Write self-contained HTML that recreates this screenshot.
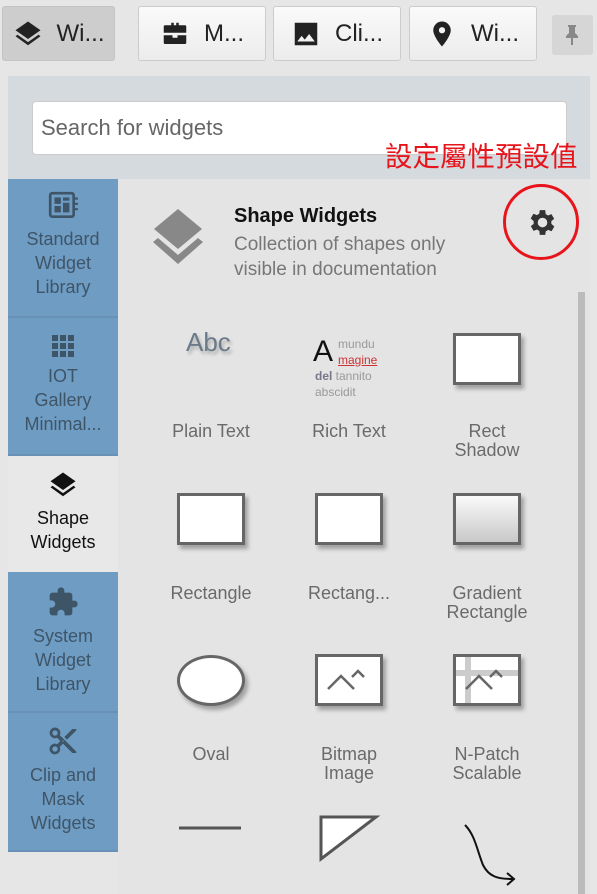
<!DOCTYPE html>
<html><head><meta charset="utf-8"><style>
*{box-sizing:border-box;margin:0;padding:0}
body{width:597px;height:894px;background:#e6e6e6;font-family:"Liberation Sans","Noto Sans CJK TC",sans-serif;position:relative;overflow:hidden}
.tab{position:absolute;top:6px;height:55px;border:1px solid #ccc;border-radius:3px;background:linear-gradient(#fafafa,#ececec);font-size:24px;color:#222;display:flex;align-items:center;justify-content:center;gap:14px}
.tab.act{background:#cdcdcd;border-color:#c4c4c4}
.pin{position:absolute;left:552px;top:15px;width:41px;height:40px;background:#d6d6d6;border-radius:3px}
.hdr{position:absolute;left:8px;top:76px;width:582px;height:103px;background:#d4dade}
.search{position:absolute;left:32px;top:101px;width:535px;height:54px;background:#fff;border:1px solid #ccc;border-radius:4px;font-size:22px;color:#666;padding:13px 0 0 8px}
.cn{position:absolute;left:385px;top:134px;font-size:27.5px;color:#e8141c;font-family:"Noto Sans CJK TC",sans-serif;letter-spacing:0}
.side{position:absolute;left:8px;width:110px;background:#6f9cc3;color:#3e5568;font-size:18px;text-align:center;line-height:24px;border-bottom:2px solid #6891b5}
.side svg{display:block;margin:0 auto 6px}
.main{position:absolute;left:118px;top:179px;width:472px;height:715px;background:#e4e4e4}
.lbl{position:absolute;width:130px;text-align:center;font-size:18px;color:#6a6a6a;line-height:19px}
.box{position:absolute;width:68px;height:52px;background:#fff;border:3px solid #666;box-shadow:3px 4px 4px rgba(0,0,0,.3)}
</style></head><body>
<div class="tab act" style="left:2px;width:113px"><svg width="30" height="30" viewBox="0 0 24 24"><path fill="#222" d="M12 2L2 9l10 7 10-7z"/><path fill="#222" d="M12 18.5L3.6 12.6 2 13.8 12 21l10-7.2-1.6-1.2z"/></svg>Wi...</div>
<div class="tab" style="left:138px;width:128px"><svg width="30" height="30" viewBox="0 0 24 24"><path fill="#222" d="M9 3h6v2h5a1 1 0 011 1v5H3V6a1 1 0 011-1h5zm2 0v2h2V3zM3 13h7v2h4v-2h7v6a1 1 0 01-1 1H4a1 1 0 01-1-1z"/></svg>M...</div>
<div class="tab" style="left:273px;width:128px"><svg width="30" height="30" viewBox="0 0 24 24"><path fill="#222" d="M3 3h18v18H3zm2 15h14l-4.5-6-3.5 4.5-2.5-3z"/></svg>Cli...</div>
<div class="tab" style="left:409px;width:128px"><svg width="30" height="30" viewBox="0 0 24 24"><path fill="#222" d="M12 2a7 7 0 00-7 7c0 5 7 13 7 13s7-8 7-13a7 7 0 00-7-7zm0 9.5a2.5 2.5 0 110-5 2.5 2.5 0 010 5z"/></svg>Wi...</div>
<div class="pin"><svg style="margin:9px 0 0 13px" width="14" height="22" viewBox="0 0 14 22"><path fill="#888" d="M3 1h8v2H10v6l3 3v2H8v7H6v-7H1v-2l3-3V3H3z"/></svg></div>
<div class="hdr"></div>
<div class="search">Search for widgets</div>
<div class="cn">設定屬性預設值</div>

<div class="side" style="top:179px;height:139px;padding-top:12px"><svg width="32" height="30" viewBox="0 0 30 28"><rect x="3" y="2" width="22" height="22" rx="2" fill="none" stroke="#3e5568" stroke-width="2.5"/><rect x="7" y="6" width="6" height="6" fill="#3e5568"/><rect x="7" y="14" width="6" height="6" fill="#3e5568"/><rect x="15" y="6" width="6" height="3" fill="#3e5568"/><rect x="15" y="11" width="6" height="9" fill="#3e5568"/><path d="M26 7h3M26 12h3M26 17h3" stroke="#3e5568" stroke-width="2"/></svg>Standard<br>Widget<br>Library</div>
<div class="side" style="top:318px;height:138px;padding-top:16px"><svg width="24" height="24" viewBox="0 0 24 24"><g fill="#3e5568"><rect x="1" y="1" width="6" height="6"/><rect x="9" y="1" width="6" height="6"/><rect x="17" y="1" width="6" height="6"/><rect x="1" y="9" width="6" height="6"/><rect x="9" y="9" width="6" height="6"/><rect x="17" y="9" width="6" height="6"/><rect x="1" y="17" width="6" height="6"/><rect x="9" y="17" width="6" height="6"/><rect x="17" y="17" width="6" height="6"/></g></svg>IOT<br>Gallery<br>Minimal...</div>
<div class="side" style="top:456px;height:116px;padding-top:14px;background:#e8e8e8;color:#111;border:none"><svg width="30" height="30" viewBox="0 0 24 24"><path fill="#111" d="M12 2L2 9l10 7 10-7z"/><path fill="#111" d="M12 18.5L3.6 12.6 2 13.8 12 21l10-7.2-1.6-1.2z"/></svg>Shape<br>Widgets</div>
<div class="side" style="top:572px;height:141px;padding-top:14px"><svg width="32" height="32" viewBox="0 0 24 24"><path fill="#3e5568" d="M20.5 11H19V7a2 2 0 00-2-2h-4V3.5a2.5 2.5 0 00-5 0V5H4a2 2 0 00-2 2v3.8h1.5a2.7 2.7 0 010 5.4H2V20a2 2 0 002 2h3.8v-1.5a2.7 2.7 0 015.4 0V22H17a2 2 0 002-2v-4h1.5a2.5 2.5 0 000-5z"/></svg>System<br>Widget<br>Library</div>
<div class="side" style="top:713px;height:139px;padding-top:12px"><svg width="32" height="32" viewBox="0 0 24 24"><path fill="#3e5568" d="M9.6 7.6A4 4 0 102 6a4 4 0 005.6 3.6L10 12l-2.4 2.4A4 4 0 106 22a4 4 0 003.6-5.6L12 14l7 7h3v-1zM6 8a2 2 0 110-4 2 2 0 010 4zm0 12a2 2 0 110-4 2 2 0 010 4zm6-7.5a.5.5 0 110-1 .5.5 0 010 1zM19 3l-6 6 2 2 7-7V3z"/></svg>Clip and<br>Mask<br>Widgets</div>

<div class="main"></div>
<svg style="position:absolute;left:150px;top:207px" width="56" height="58" viewBox="0 0 56 58"><path fill="#888" d="M28 2L4 22l24 20 24-20z"/><path fill="#888" d="M28 48L8 31l-5 4 25 22 25-22-5-4z"/></svg>
<div style="position:absolute;left:234px;top:205px;font-size:20px;font-weight:bold;color:#111">Shape Widgets</div>
<div style="position:absolute;left:234px;top:232px;font-size:19px;color:#777;line-height:25px">Collection of shapes only<br>visible in documentation</div>
<div style="position:absolute;left:503px;top:184px;width:76px;height:76px;border:3px solid #e8141c;border-radius:50%"></div>
<svg style="position:absolute;left:526px;top:206px" width="33" height="33" viewBox="0 0 24 24"><path fill="#333" d="M19.4 13a7.5 7.5 0 000-2l2.1-1.6-2-3.5-2.5 1a7 7 0 00-1.7-1L15 3h-4l-.4 2.6a7 7 0 00-1.7 1l-2.5-1-2 3.5L6.6 11a7.5 7.5 0 000 2l-2.1 1.6 2 3.5 2.5-1a7 7 0 001.7 1L11 21h4l.4-2.6a7 7 0 001.7-1l2.5 1 2-3.5zM13 15.5a3.5 3.5 0 110-7 3.5 3.5 0 010 7z" transform="translate(-1 0)"/></svg>
<div style="position:absolute;left:578px;top:292px;width:7px;height:602px;background:#bbb"></div>

<div style="position:absolute;left:186px;top:327px;font-size:26px;color:#6b7a8a;text-shadow:2px 3px 3px rgba(0,0,0,.25)">Abc</div>
<div style="position:absolute;left:313px;top:335px;font-size:30px;color:#111">A</div>
<div style="position:absolute;left:338px;top:336px;font-size:12px;color:#999;line-height:16px">mundu<br><span style="color:#c33;text-decoration:underline">magine</span></div>
<div style="position:absolute;left:315px;top:368px;font-size:12px;color:#999;line-height:16px"><b style="color:#778">del</b> tannito<br>abscidit</div>
<div class="box" style="left:453px;top:333px"></div>
<div class="lbl" style="left:146px;top:422px">Plain Text</div>
<div class="lbl" style="left:284px;top:422px">Rich Text</div>
<div class="lbl" style="left:422px;top:422px">Rect<br>Shadow</div>

<div class="box" style="left:177px;top:493px"></div>
<div class="box" style="left:315px;top:493px"></div>
<div class="box" style="left:453px;top:493px;background:linear-gradient(#fafafa,#c8c8c8)"></div>
<div class="lbl" style="left:146px;top:584px">Rectangle</div>
<div class="lbl" style="left:284px;top:584px">Rectang...</div>
<div class="lbl" style="left:422px;top:584px">Gradient<br>Rectangle</div>

<div style="position:absolute;left:177px;top:655px;width:68px;height:51px;background:#fff;border:3px solid #666;border-radius:50%;box-shadow:3px 4px 4px rgba(0,0,0,.3)"></div>
<div class="box" style="left:315px;top:654px"><svg width="62" height="46" viewBox="0 0 62 46"><path d="M10 32l13-13 13 13M34 20l6-6 6 6" fill="none" stroke="#666" stroke-width="2.5"/></svg></div>
<div class="box" style="left:453px;top:654px"><div style="position:absolute;left:9px;top:0;width:6px;height:46px;background:#ccc"></div><div style="position:absolute;left:0;top:13px;width:62px;height:6px;background:#ccc"></div><svg style="position:absolute;left:0;top:0" width="62" height="46" viewBox="0 0 62 46"><path d="M10 32l13-13 13 13M34 20l6-6 6 6" fill="none" stroke="#666" stroke-width="2.5"/></svg></div>
<div class="lbl" style="left:146px;top:745px">Oval</div>
<div class="lbl" style="left:284px;top:745px">Bitmap<br>Image</div>
<div class="lbl" style="left:422px;top:745px">N-Patch<br>Scalable</div>

<svg style="position:absolute;left:175px;top:810px" width="360" height="84" viewBox="0 0 360 84"><path d="M4 18h62" stroke="#555" stroke-width="3" fill="none"/><path d="M146 7h55l-55 42z" fill="#fff" stroke="#555" stroke-width="3"/><path d="M290 15c10 10 12 25 18 40 6 12 15 14 30 14" stroke="#111" stroke-width="2" fill="none"/><path d="M332 63l7 6-7 6" stroke="#111" stroke-width="2" fill="none"/></svg>
</body></html>
